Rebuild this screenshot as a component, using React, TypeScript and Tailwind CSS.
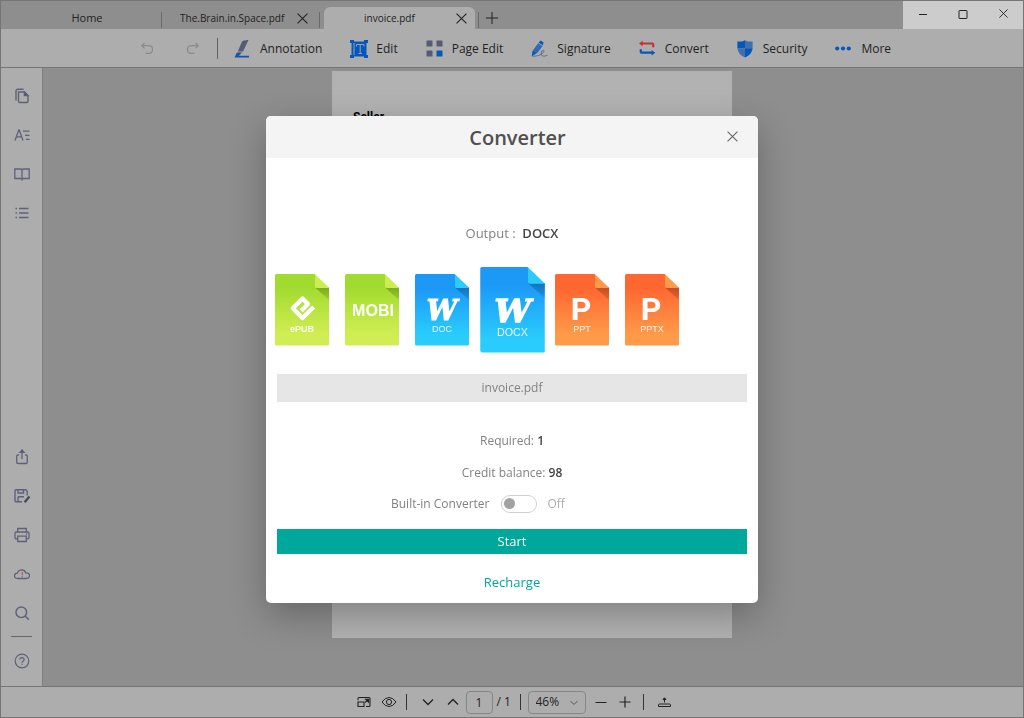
import { useState } from "react";
import type { ReactNode } from "react";

type Tool = { label: string; icon: ReactNode };
type Format = { name: string; kind: "epub" | "mobi" | "word" | "ppt" };

const tools: Tool[] = [
    {
        label: "Annotation",
        icon: (
            <svg viewBox="0 0 18 20" className="w-[18px] h-5">
                <path d="M8 2.5Q9.5 0.8 14.5 1L9 12.5H3.8Z" fill="#585a74" />
                <path d="M3.4 13.2H8.4L4.5 16H2.2Z" fill="#585a74" />
                <path d="M2.4 14.2L0.6 18.4H15V16.8H4.6Q7 15.5 6.8 14.2Z" fill="#0657b8" />
            </svg>
        ),
    },
    {
        label: "Edit",
        icon: (
            <svg viewBox="0 0 18 18" className="w-[18px] h-[18px]">
                <path d="M1.5 1.5H16.5V16.5H1.5Z" fill="#0657b8" />
                <path d="M0 0H4V3H0ZM14 0H18V3H14ZM0 15H4V18H0ZM14 15H18V18H14Z" fill="#0657b8" />
                <path d="M4 3V15M6.5 6.5V4.5H14V6.5M10.2 4.5V13.5M8.5 13.5H12" fill="none" stroke="#8fa3bd" strokeWidth="1" />
            </svg>
        ),
    },
    {
        label: "Page Edit",
        icon: (
            <svg viewBox="0 0 18 18" className="w-[18px] h-[18px]">
                <rect x="0.5" y="0.5" width="6" height="6" rx="0.6" fill="#585a74" />
                <rect x="10.5" y="0.5" width="6" height="6" rx="0.6" fill="#585a74" />
                <rect x="0.5" y="10.5" width="6" height="6" rx="0.6" fill="#585a74" />
                <rect x="10.5" y="10.5" width="6" height="6" rx="0.6" fill="#0657b8" />
            </svg>
        ),
    },
    {
        label: "Signature",
        icon: (
            <svg viewBox="0 0 18 18" className="w-[18px] h-[18px]">
                <path d="M7.5 2.6L9.8 0.6L12.6 2.4L11.8 5.2Z" fill="#0657b8" />
                <path d="M7.2 3.2L11.6 6L6.6 12.8L0.8 16.2L1.8 10.4Z" fill="#2f6bb5" />
                <path d="M0.8 16.2L1.8 10.8L5 13.2Z" fill="#0657b8" />
                <path d="M1.5 16.4Q8 16.4 11.5 13.4Q14 10.8 12.4 10.3Q10.6 10.3 10.2 13Q10 16.3 12.5 16.2Q14.5 16.2 16.5 15.2" fill="none" stroke="#6b6d86" strokeWidth="1" />
            </svg>
        ),
    },
    {
        label: "Convert",
        icon: (
            <svg viewBox="0 0 18 18" className="w-[18px] h-[18px]">
                <path d="M3 3.5H13.5Q14.2 3.5 14.2 4.2V7.2" fill="none" stroke="#c53333" strokeWidth="2.2" />
                <path d="M0 3.5L3.6 0.8V6.2Z" fill="#c53333" />
                <path d="M1.8 9.3V12Q1.8 12.7 2.5 12.7H13" fill="none" stroke="#0657b8" strokeWidth="2.2" />
                <path d="M16.2 12.7L12.6 10V15.4Z" fill="#0657b8" />
            </svg>
        ),
    },
    {
        label: "Security",
        icon: (
            <svg viewBox="0 0 18 18" className="w-[18px] h-[18px]">
                <path d="M8 0.2L5 1.6L0.4 1.4V8.2H8Z" fill="#0657b8" />
                <path d="M8 0.2L11 1.6L15.6 1.4V8.2H8Z" fill="#3f70ad" />
                <path d="M0.4 8.2H8V17.4Q1 14.5 0.4 8.2Z" fill="#3f70ad" />
                <path d="M15.6 8.2H8V17.4Q15 14.5 15.6 8.2Z" fill="#0657b8" />
            </svg>
        ),
    },
    {
        label: "More",
        icon: (
            <svg viewBox="0 0 18 18" className="w-[18px] h-[18px]">
                <circle cx="2.2" cy="8.5" r="2.1" fill="#0657b8" />
                <circle cx="8" cy="8.5" r="2.1" fill="#0657b8" />
                <circle cx="13.8" cy="8.5" r="2.1" fill="#0657b8" />
            </svg>
        ),
    },
];

const panels: Tool[] = [
    {
        label: "Pages",
        icon: (
            <>
                <path d="M4.5 4H10.5L14 7.5V13.2Q14 14.5 12.7 14.5H5.8Q4.5 14.5 4.5 13.2Z" strokeWidth="1.4" />
                <path d="M10.3 4V7.7H14Z" fill="#44465c" />
                <path d="M2 12.5V3.3Q2 1.3 4 1.3H9.5" strokeWidth="1.4" />
            </>
        ),
    },
    {
        label: "Text view",
        icon: (
            <>
                <path d="M1 13.5L4.8 3H5.2L9 13.5M2.5 9.8H7.6" strokeWidth="1.3" />
                <path d="M9 4.2H15.5M11 8.3H15.5M12 12.3H15.5" strokeWidth="1.3" />
            </>
        ),
    },
    {
        label: "Reading mode",
        icon: <path d="M8 3.5V14.5M0.8 3H6.5Q8 3 8 4Q8 3 9.5 3H15.2V12.5H9.5Q8 12.5 8 13.5Q8 12.5 6.5 12.5H0.8Z" strokeWidth="1.3" />,
    },
    {
        label: "Outline",
        icon: <path d="M5 3.5H14.5M5 8H14.5M5 12.5H14.5M1.5 3.5H3M1.5 8H3M1.5 12.5H3" strokeWidth="1.4" />,
    },
];

const actions: Tool[] = [
    {
        label: "Share",
        icon: (
            <>
                <path d="M5 6H4Q2.7 6 2.7 7.3V13.2Q2.7 14.5 4 14.5H12Q13.3 14.5 13.3 13.2V7.3Q13.3 6 12 6H11M8 2V10" strokeWidth="1.3" />
                <path d="M8 0.8L5.8 3.4H10.2Z" fill="#44465c" />
            </>
        ),
    },
    {
        label: "Save as",
        icon: (
            <>
                <path d="M8 13.8H2.2Q1 13.8 1 12.6V3Q1 1.8 2.2 1.8H11.8L13.2 3.2V7.5M4 13.5V9.5Q4 8.7 4.8 8.7H10M4 2V5H9.5V2" strokeWidth="1.4" />
                <path d="M15.4 8.4L10.6 14.2" strokeWidth="2.2" stroke="#44465c" />
            </>
        ),
    },
    {
        label: "Print",
        icon: <path d="M3.7 5V1.5H12.3V5M3.7 11.8H2.3Q1 11.8 1 10.5V6.3Q1 5 2.3 5H13.7Q15 5 15 6.3V10.5Q15 11.8 13.7 11.8H12.3M3.7 9.2H12.3V14.5H3.7ZM12 7H13.2" strokeWidth="1.3" />,
    },
    {
        label: "Cloud",
        icon: (
            <>
                <path d="M3.8 12.5Q0.5 12.5 0.5 9.8Q0.5 7.2 3.4 7.1Q4.2 3.8 7.6 3.8Q11 3.8 11.8 6.8Q15.5 6.8 15.5 9.6Q15.5 12.5 12.2 12.5Z" strokeWidth="1.3" />
                <path d="M8.3 6V9.2M8.3 10V11" stroke="#c9554e" />
            </>
        ),
    },
    {
        label: "Search",
        icon: <path d="M12.6 7.2A5.3 5.3 0 1 1 2 7.2A5.3 5.3 0 1 1 12.6 7.2M11 11L14.8 14.6" strokeWidth="1.5" />,
    },
];

const formats: Format[] = [
    { name: "ePUB", kind: "epub" },
    { name: "MOBI", kind: "mobi" },
    { name: "DOC", kind: "word" },
    { name: "DOCX", kind: "word" },
    { name: "PPT", kind: "ppt" },
    { name: "PPTX", kind: "ppt" },
];

const palette = {
    epub: { top: "#a2db30", bottom: "#d0ee54", fold: "#cdec50", shade: "#7cab1e" },
    mobi: { top: "#a2db30", bottom: "#d0ee54", fold: "#cdec50", shade: "#7cab1e" },
    word: { top: "#1c98f7", bottom: "#29ccfd", fold: "#29ccfd", shade: "#1573bd" },
    ppt: { top: "#ff6731", bottom: "#ff9a49", fold: "#ff9a49", shade: "#c54d22" },
};

function SideIcon({ label, children }: { label: string; children: ReactNode }) {
    return (
        <button aria-label={label} className="flex h-[39px] w-full items-center justify-center">
            <svg viewBox="0 0 16 16" className="h-4 w-4" fill="none" stroke="#5f6178" strokeWidth="1.2">
                {children}
            </svg>
        </button>
    );
}

function Cross({ className }: { className: string }) {
    return (
        <svg viewBox="0 0 10 10" className={className} fill="none" stroke="currentColor">
            <path d="M0.5 0.5L9.5 9.5M9.5 0.5L0.5 9.5" />
        </svg>
    );
}

function FileIcon({ format, selected }: { format: Format; selected: boolean }) {
    const c = palette[format.kind];
    const id = "file-" + format.name;
    return (
        <svg viewBox="0 0 54 72" className={selected ? "h-[86px] w-[65px] shrink-0" : "h-[72px] w-[54px] shrink-0"}>
            <defs>
                <linearGradient id={id} x1="0" y1="0" x2="0" y2="1">
                    <stop offset="0.2" stopColor={c.top} />
                    <stop offset="0.85" stopColor={c.bottom} />
                </linearGradient>
                <linearGradient id={id + "-shade"} x1="0" y1="0" x2="0" y2="1">
                    <stop offset="0" stopColor={c.shade} />
                    <stop offset="1" stopColor={c.shade} stopOpacity="0.3" />
                </linearGradient>
            </defs>
            <path d="M1.5 0H39.5L54 14V70.5Q54 71.5 53 71.5H1.5Q0 71.5 0 70V1.5Q0 0 1.5 0Z" fill={`url(#${id})`} />
            <path d="M40 13.5H54V26Z" fill={`url(#${id}-shade)`} />
            <path d="M40 0.5L54 14H41.5Q40 14 40 12.5Z" fill={c.fold} />
            {format.kind === "epub" && (
                <path d="M38.6 33L27.5 44L17.8 34.3L27.5 24.6L33 30L26.2 36.8" fill="none" stroke="#fff" strokeWidth="4.4" strokeLinejoin="round" />
            )}
            {format.kind === "word" && (
                <text x="27" y="46" textAnchor="middle" fill="#fff" stroke="#fff" strokeWidth="1.2" fontFamily="DejaVu Serif" fontWeight="bold" fontStyle="italic" fontSize="27">
                    W
                </text>
            )}
            {format.kind === "ppt" && (
                <text x="26" y="46" textAnchor="middle" fill="#fff" fontFamily="Roboto" fontWeight="bold" fontSize="32">
                    P
                </text>
            )}
            {format.kind === "mobi" ? (
                <text x="28" y="42" textAnchor="middle" fill="#fff" fontFamily="Liberation Sans" fontWeight="bold" fontSize="16">
                    MOBI
                </text>
            ) : (
                <text
                    x="27"
                    y="58"
                    textAnchor="middle"
                    fill="#fff"
                    fillOpacity="0.9"
                    fontFamily="Liberation Sans"
                    fontWeight={format.kind === "epub" ? "bold" : "normal"}
                    fontSize="9"
                >
                    {format.name}
                </text>
            )}
        </svg>
    );
}

function TitleBar() {
    return (
        <div className="flex h-[28px] items-end text-[11px]">
            <button className="h-[22px] w-40 pl-3 text-center">Home</button>
            <div className="mb-px h-4 w-px bg-[#6a6a6a]"></div>
            <div className="flex h-[22px] w-[157px] items-center pl-[18px] text-[10px]">
                <span className="w-[117px]">The.Brain.in.Space.pdf</span>
                <button aria-label="Close The.Brain.in.Space.pdf">
                    <Cross className="h-[11px] w-[11px]" />
                </button>
            </div>
            <div className="mb-px h-4 w-px bg-[#6a6a6a]"></div>
            <div className="ml-1 flex h-[22px] w-[151px] items-center rounded-t-md bg-[#adadad] pl-10 text-[10px]">
                <span className="w-[92px]">invoice.pdf</span>
                <button aria-label="Close invoice.pdf">
                    <Cross className="h-[11px] w-[11px]" />
                </button>
            </div>
            <div className="mb-px ml-[3px] h-4 w-px bg-[#6a6a6a]"></div>
            <button aria-label="New tab" className="ml-[7px] flex h-[22px] items-center">
                <svg viewBox="0 0 12 12" className="h-3 w-3" stroke="currentColor">
                    <path d="M6 0V12M0 6H12" />
                </svg>
            </button>
            <div className="ml-auto flex h-[28px] bg-[#cccccc] text-[#222222]">
                <button aria-label="Minimize" className="flex w-10 items-center justify-center">
                    <svg viewBox="0 0 10 10" className="h-[10px] w-[10px]" stroke="currentColor">
                        <path d="M1 4.5H9" />
                    </svg>
                </button>
                <button aria-label="Maximize" className="flex w-10 items-center justify-center">
                    <svg viewBox="0 0 10 10" className="h-[10px] w-[10px]" fill="none" stroke="currentColor">
                        <rect x="1" y="0.5" width="8" height="8" rx="0.5" />
                    </svg>
                </button>
                <button aria-label="Close window" className="flex w-10 items-center justify-center pb-1">
                    <Cross className="h-[9px] w-[9px]" />
                </button>
            </div>
        </div>
    );
}

function Toolbar() {
    return (
        <div className="flex h-[39px] items-center border-b border-[#757575] bg-[#adadad] pl-[139px] pt-px text-xs">
            <button aria-label="Undo">
                <svg viewBox="0 0 14 14" className="h-[14px] w-[14px]" fill="none" stroke="#8a8a92" strokeWidth="1.2">
                    <path d="M4.5 1L1.8 3.7L4.5 6.4M1.8 3.7H9Q12.5 3.7 12.5 7.6Q12.5 11.4 9 11.4H5.5" />
                </svg>
            </button>
            <button aria-label="Redo" className="ml-8">
                <svg viewBox="0 0 14 14" className="h-[14px] w-[14px]" fill="none" stroke="#8a8a92" strokeWidth="1.2">
                    <path d="M9.5 1L12.2 3.7L9.5 6.4M12.2 3.7H5Q1.5 3.7 1.5 7.6Q1.5 11.4 5 11.4H8.5" />
                </svg>
            </button>
            <div className="ml-[17px] h-[21px] w-px bg-[#606060]"></div>
            <div className="ml-4 flex gap-7">
                {tools.map((tool) => (
                    <button key={tool.label} className="flex items-center gap-2">
                        {tool.icon}
                        {tool.label}
                    </button>
                ))}
            </div>
        </div>
    );
}

function StatusBar() {
    return (
        <div className="flex h-[31px] items-center justify-center border-t border-[#757575] bg-[#adadad] pl-[3px] text-xs">
            <button aria-label="Fit page">
                <svg viewBox="0 0 14 12" className="h-3 w-[14px]" fill="none" stroke="currentColor" strokeWidth="1.1">
                    <path d="M1 4.2V2.5Q1 1.5 2 1.5H12Q13 1.5 13 2.5V9.5Q13 10.5 12 10.5H9M1 6H7V10.5H1ZM8 6.5L11 3.8" />
                    <path d="M8.6 3.2H11.6V6.2Z" fill="currentColor" />
                </svg>
            </button>
            <button aria-label="Preview" className="ml-[10px]">
                <svg viewBox="0 0 16 12" className="h-3 w-4" fill="none" stroke="currentColor">
                    <path d="M1 6Q4 1.5 8 1.5T15 6Q12 10.5 8 10.5T1 6Z" />
                    <circle cx="8" cy="6" r="2.6" />
                </svg>
            </button>
            <div className="ml-[9px] h-4 w-px bg-[#333333]"></div>
            <button aria-label="Next page" className="ml-[15px]">
                <svg viewBox="0 0 12 12" className="h-3 w-3" fill="none" stroke="currentColor" strokeWidth="1.3">
                    <path d="M1 3.5L6 8.5L11 3.5" />
                </svg>
            </button>
            <button aria-label="Previous page" className="ml-[13px]">
                <svg viewBox="0 0 12 12" className="h-3 w-3" fill="none" stroke="currentColor" strokeWidth="1.3">
                    <path d="M1 8.5L6 3.5L11 8.5" />
                </svg>
            </button>
            <input aria-label="Page" defaultValue="1" className="ml-[7px] h-[23px] w-[27px] rounded border border-[#868686] text-center" />
            <span className="ml-1 w-[15px] whitespace-nowrap">/ 1</span>
            <div className="ml-2 h-4 w-px bg-[#333333]"></div>
            <div className="relative ml-[7px] flex">
                <select aria-label="Zoom" defaultValue="46%" className="h-[23px] w-[58px] appearance-none rounded border border-[#868686] pl-[7px]">
                    <option>46%</option>
                    <option>100%</option>
                </select>
                <svg viewBox="0 0 8 6" className="pointer-events-none absolute right-2 top-[9px] h-[6px] w-2" fill="none" stroke="#555555">
                    <path d="M0.5 1L4 4.5L7.5 1" />
                </svg>
            </div>
            <button aria-label="Zoom out" className="ml-[9px]">
                <svg viewBox="0 0 12 12" className="h-3 w-3" stroke="currentColor">
                    <path d="M0.5 6.5H11.5" />
                </svg>
            </button>
            <button aria-label="Zoom in" className="ml-3">
                <svg viewBox="0 0 12 12" className="h-3 w-3" stroke="currentColor" strokeWidth="1.2">
                    <path d="M0.5 6H11.5M6 0.5V11.5" />
                </svg>
            </button>
            <div className="ml-3 h-4 w-px bg-[#333333]"></div>
            <button aria-label="Scroll to top" className="ml-[14px]">
                <svg viewBox="0 0 13 12" className="h-3 w-[13px]" fill="none" stroke="currentColor">
                    <path d="M6.5 6.5V3M1.5 8H11.5Q12.5 8 12.5 9V10.5H0.5V9Q0.5 8 1.5 8Z" />
                    <path d="M6.5 1.8L5 3.5H8Z" fill="currentColor" />
                </svg>
            </button>
        </div>
    );
}

function ConverterDialog() {
    const [selected, setSelected] = useState("DOCX");
    const [builtIn, setBuiltIn] = useState(false);
    return (
        <div role="dialog" aria-labelledby="converter-title" className="flex w-[492px] flex-col overflow-hidden rounded-[5px] bg-white text-[13px] leading-5 text-[#828282] shadow-[0_12px_36px_rgba(0,0,0,0.28)]">
            <div className="flex h-[42px] items-center bg-[#f4f4f4] px-5">
                <h1 id="converter-title" className="flex-1 pl-[22px] pt-[3px] text-center text-xl font-semibold text-[#505050]">
                    Converter
                </h1>
                <button aria-label="Close" className="text-[#666666]">
                    <Cross className="h-[11px] w-[11px]" />
                </button>
            </div>
            <div className="mt-[65px] text-center">
                Output :&nbsp; <span className="font-semibold text-[#444444]">{selected}</span>
            </div>
            <div className="mt-[31px] flex h-[72px] gap-4 pl-[9px]">
                {formats.map((format) => (
                    <button
                        key={format.name}
                        aria-pressed={selected === format.name}
                        onClick={() => setSelected(format.name)}
                        className="flex w-[54px] items-center justify-center"
                    >
                        <FileIcon format={format} selected={selected === format.name} />
                    </button>
                ))}
            </div>
            <div className="mx-[11px] mt-7 flex h-7 items-center justify-center bg-[#e6e6e6] text-xs">invoice.pdf</div>
            <div className="mt-[29px] text-center text-xs leading-5">
                Required: <span className="font-semibold text-[#444444]">1</span>
            </div>
            <div className="mt-3 text-center text-xs leading-5">
                Credit balance: <span className="font-semibold text-[#444444]">98</span>
            </div>
            <div className="mt-[11px] flex h-5 items-center gap-[11px] pl-[125px] text-xs">
                <label htmlFor="built-in">Built-in Converter</label>
                <input
                    id="built-in"
                    type="checkbox"
                    role="switch"
                    checked={builtIn}
                    onChange={(e) => setBuiltIn(e.target.checked)}
                    className="flex h-[18px] w-9 appearance-none items-center rounded-full border border-[#cfcfcf] px-[2px] before:h-[11px] before:w-[11px] before:rounded-full before:bg-[#a2a2a2] checked:justify-end"
                />
                <span className="text-[#adadad]">{builtIn ? "On" : "Off"}</span>
            </div>
            <button className="mx-[11px] mt-[15px] h-[25px] bg-[#00a79b] text-white">Start</button>
            <a href="#" className="mb-[11px] mt-[18px] self-center text-[#00a79b]">
                Recharge
            </a>
        </div>
    );
}

export default function App() {
    return (
        <div className="flex h-screen flex-col border border-[#757575] bg-[#8e8e8e] font-['Open_Sans',sans-serif] text-[#222222]">
            <TitleBar />
            <Toolbar />
            <div className="flex min-h-0 flex-1">
                <div className="flex w-[42px] shrink-0 flex-col border-r border-[#7f7f7f] bg-[#adadad] pb-[6px] pt-2">
                    {panels.map((panel) => (
                        <SideIcon key={panel.label} label={panel.label}>
                            {panel.icon}
                        </SideIcon>
                    ))}
                    <div className="flex-1"></div>
                    {actions.map((action) => (
                        <SideIcon key={action.label} label={action.label}>
                            {action.icon}
                        </SideIcon>
                    ))}
                    <div className="mx-[10px] my-1 h-px bg-[#666666]"></div>
                    <SideIcon label="Help">
                        <circle cx="8" cy="8" r="6.8" />
                        <path d="M5.9 6.6Q5.9 4.6 8 4.6T10.1 6.5Q10.1 7.5 9 8.2Q8 8.8 8 9.7M8 10.7V11.8" />
                    </SideIcon>
                </div>
                <div className="flex flex-1 justify-center pb-12 pr-[2px] pt-[3px]">
                    <div className="w-[400px] bg-[#b2b2b2] px-[21px] pt-[38px] font-['Roboto',sans-serif] text-xs font-bold text-black">Seller</div>
                </div>
            </div>
            <StatusBar />
            <div className="fixed inset-0 flex items-center justify-center">
                <ConverterDialog />
            </div>
        </div>
    );
}
